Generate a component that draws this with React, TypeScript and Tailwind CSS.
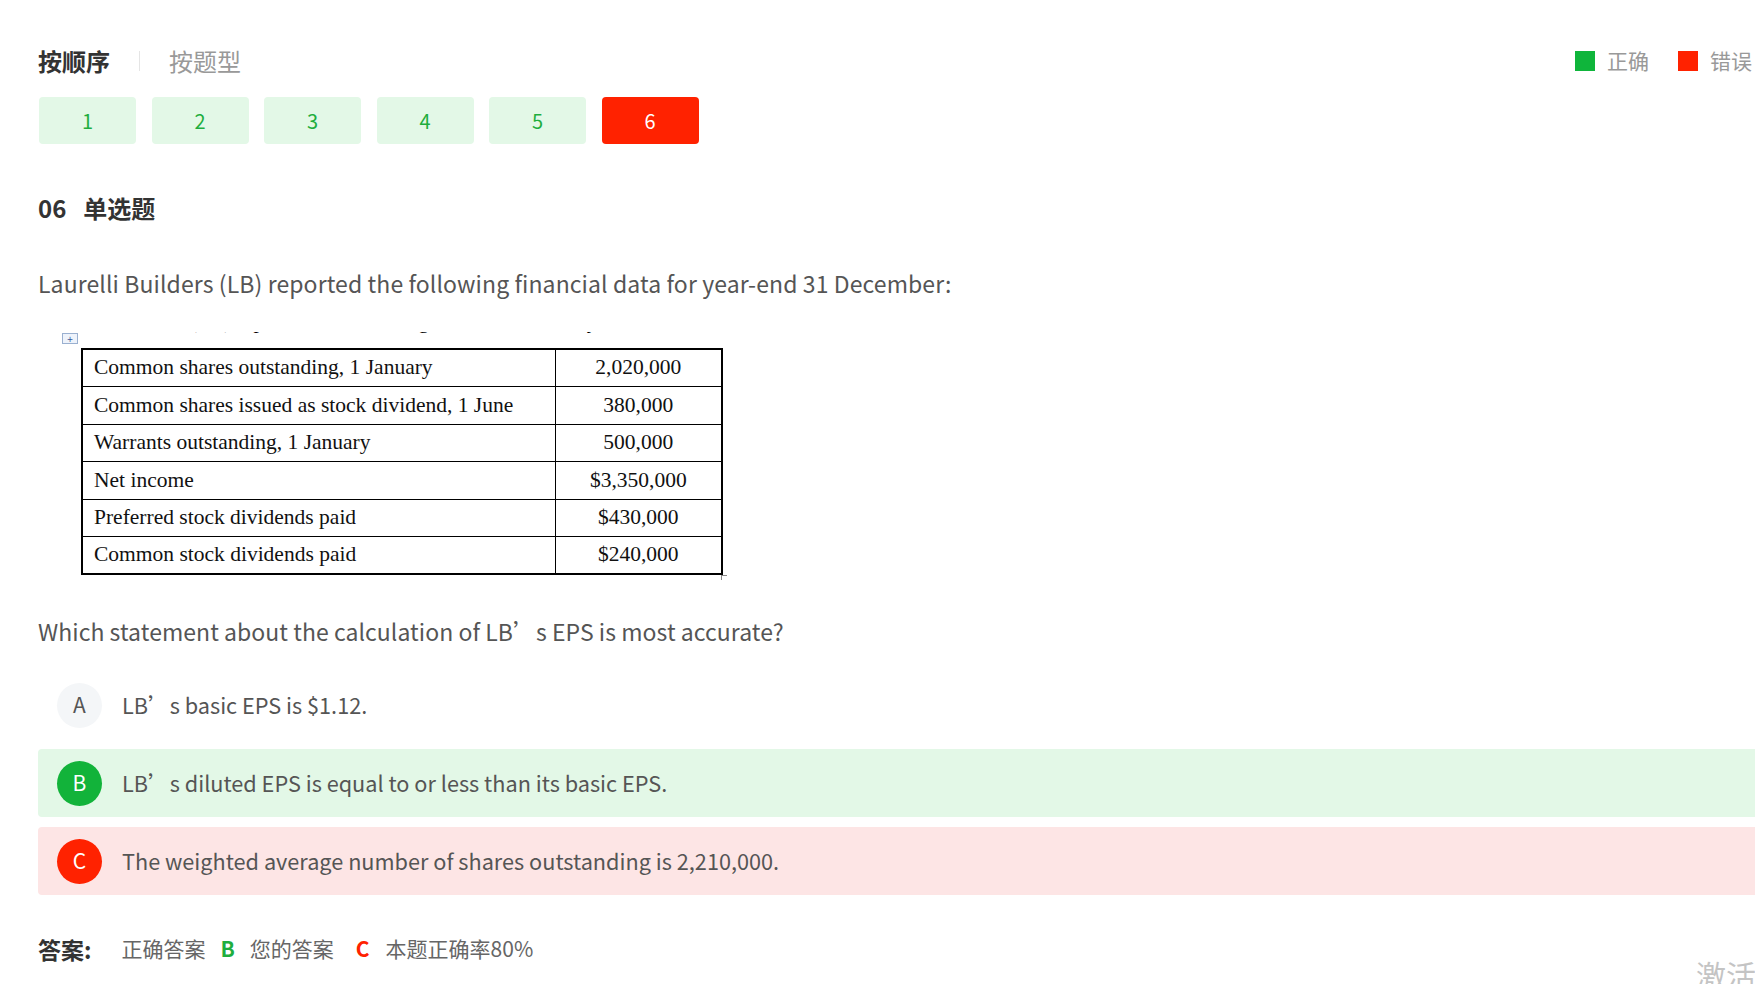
import React from "react";

const ui = { fontFamily: '"Noto Sans CJK SC", "Noto Sans", sans-serif' };
const serif = { fontFamily: '"Liberation Serif", "Times New Roman", serif' };

const rows = [
  ["Common shares outstanding, 1 January", "2,020,000"],
  ["Common shares issued as stock dividend, 1 June", "380,000"],
  ["Warrants outstanding, 1 January", "500,000"],
  ["Net income", "$3,350,000"],
  ["Preferred stock dividends paid", "$430,000"],
  ["Common stock dividends paid", "$240,000"],
];

const options = [
  { key: "A", text: "LB’s basic EPS is $1.12.", state: "none" },
  { key: "B", text: "LB’s diluted EPS is equal to or less than its basic EPS.", state: "right" },
  { key: "C", text: "The weighted average number of shares outstanding is 2,210,000.", state: "wrong" },
];

export default function App() {
  return (
    <div className="relative w-[1755px] h-[984px] overflow-hidden bg-white" style={ui}>
      <div className="pl-[38px] pt-[46px]">
        {/* Tabs + legend */}
        <div className="flex h-[30px] items-center justify-between pr-[3px]">
          <div className="flex items-center">
            <span className="text-[24px] font-bold text-[#333]">按顺序</span>
            <span className="mx-[29px] h-[20px] w-px bg-[#e5e5e5]" />
            <span className="text-[24px] text-[#999]">按题型</span>
          </div>
          <div className="flex items-center text-[21px] text-[#999]">
            <span className="mr-[12px] h-[20px] w-[20px] bg-[#0fb53b]" />
            <span>正确</span>
            <span className="ml-[29px] mr-[12px] h-[20px] w-[20px] bg-[#ff2200]" />
            <span>错误</span>
          </div>
        </div>

        {/* Question number buttons */}
        <div className="mt-[21px] flex gap-[15.5px] pl-px">
          {[1, 2, 3, 4, 5, 6].map((n) => (
            <div
              key={n}
              className={
                n === 6
                  ? "flex h-[47px] w-[97px] items-center justify-center rounded-[4px] bg-[#ff2200] text-[20px] text-white"
                  : "flex h-[47px] w-[97px] items-center justify-center rounded-[4px] bg-[#e3f8e7] text-[20px] text-[#1fae3e]"
              }
            >
              {n}
            </div>
          ))}
        </div>

        {/* Heading */}
        <div className="mt-[49px] flex h-[30px] items-center text-[24px] font-bold text-[#333]">
          <span>06</span>
          <span className="ml-[17px]">单选题</span>
        </div>

        {/* Stem */}
        <p className="mt-[45px] h-[30px] text-[23px] leading-[30px] tracking-[0.1px] text-[#555]">
          Laurelli Builders (LB) reported the following financial data for year-end 31 December:
        </p>

        {/* Table picture (pasted screenshot of a Word table) */}
        <div className="mt-[34px] ml-[24px] w-[667px]">
          <div className="relative h-[16px]">
            <div className="absolute left-0 top-[1px] flex h-[11px] w-[16px] items-center justify-center border border-[#9ab0d0] bg-[#eef3fb] text-[10px] leading-none text-[#3a5a9a]">
              +
            </div>
            <div className="absolute left-[19px] top-0 h-[7px] w-[640px] overflow-hidden">
              <div className="-mt-[21px] ml-[-43px] whitespace-nowrap text-[21.5px] leading-[20px] text-black" style={serif}>
                Laurelli Builders (LB) reported the following financial data for year-end 31 December:
              </div>
            </div>
          </div>
          <table className="ml-[19px] border-collapse border-2 border-black text-[21.5px] text-[#111]" style={serif}>
            <tbody>
              {rows.map(([label, value]) => (
                <tr key={label} className="h-[37.5px]">
                  <td className="w-[473px] border-[1.5px] border-black pl-[11px] leading-none">{label}</td>
                  <td className="w-[167px] border-[1.5px] border-black text-center leading-none">{value}</td>
                </tr>
              ))}
            </tbody>
          </table>
          <div className="ml-[659px] h-[5px] w-[6px] border-l border-t border-[#888]" />
        </div>

        {/* Question */}
        <p className="mt-[36px] h-[30px] text-[23px] leading-[30px] tracking-[0.05px] text-[#555]">
          Which statement about the calculation of LB’s EPS is most accurate?
        </p>

        {/* Options */}
        <div className="mt-[25px] flex flex-col gap-[10px]">
          {options.map((o) => (
            <div
              key={o.key}
              className={
                o.state === "right"
                  ? "flex h-[68px] items-center rounded-l-[4px] bg-[#e3f8e7] pl-[19px]"
                  : o.state === "wrong"
                  ? "flex h-[68px] items-center rounded-l-[4px] bg-[#fde5e5] pl-[19px]"
                  : "flex h-[68px] items-center pl-[19px]"
              }
            >
              <span
                className={
                  o.state === "right"
                    ? "flex h-[45px] w-[45px] items-center justify-center rounded-full bg-[#12b33a] text-[21px] text-white"
                    : o.state === "wrong"
                    ? "flex h-[45px] w-[45px] items-center justify-center rounded-full bg-[#ff2200] text-[21px] text-white"
                    : "flex h-[45px] w-[45px] items-center justify-center rounded-full bg-[#f4f6f8] text-[21px] text-[#555]"
                }
              >
                {o.key}
              </span>
              <span className="ml-[20px] text-[21.7px] text-[#555]">{o.text}</span>
            </div>
          ))}
        </div>

        {/* Answer */}
        <div className="mt-[39px] flex h-[30px] items-center text-[21px] text-[#666]">
          <span className="text-[23px] font-bold text-[#333]">答案:</span>
          <span className="ml-[30px]">正确答案</span>
          <span className="ml-[15px] font-bold text-[#1fae3e]">B</span>
          <span className="ml-[15px]">您的答案</span>
          <span className="ml-[22px] font-bold text-[#ff2200]">C</span>
          <span className="ml-[16px]">本题正确率80%</span>
        </div>
      </div>

      {/* Windows activation watermark */}
      <div className="absolute left-[1696px] top-[959px] whitespace-nowrap text-[30px] leading-none text-[#c4c4c4]">激活</div>
    </div>
  );
}
